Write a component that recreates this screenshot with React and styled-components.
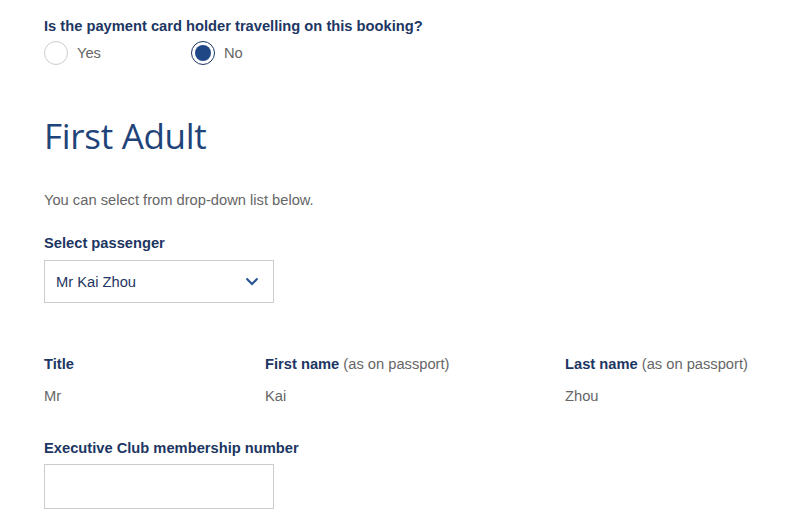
import React from 'react';
import styled, { createGlobalStyle } from 'styled-components';

const GlobalStyle = createGlobalStyle`
  body {
    margin: 0;
    background: #fff;
    font-family: "Liberation Sans", Arial, sans-serif;
  }
`;

const Page = styled.div`
  padding: 17px 44px 0;
  width: 800px;
  box-sizing: border-box;
`;

const Question = styled.div`
  font-size: 14.7px;
  font-weight: bold;
  color: #1d3663;
  line-height: 18px;
`;

const RadioRow = styled.div`
  display: flex;
  margin-top: 6px;
`;

const RadioOption = styled.label`
  display: flex;
  align-items: center;
  gap: 9px;
  width: 147px;
  font-size: 14.7px;
  color: #666;
`;

const RadioCircle = styled.span`
  width: 24px;
  height: 24px;
  box-sizing: border-box;
  border-radius: 50%;
  border: 1px solid ${p => (p.checked ? '#1d3663' : '#ccc')};
  display: flex;
  align-items: center;
  justify-content: center;
  &::after {
    content: '';
    display: ${p => (p.checked ? 'block' : 'none')};
    width: 16px;
    height: 16px;
    border-radius: 50%;
    background: #1f4785;
  }
`;

const Heading = styled.h1`
  margin: 48px 0 0;
  font-family: "Open Sans", sans-serif;
  font-weight: 400;
  font-size: 35px;
  line-height: 46px;
  color: #1f4479;
  letter-spacing: -0.3px;
`;

const Hint = styled.p`
  margin: 32px 0 0;
  font-size: 14.7px;
  color: #666;
  line-height: 18px;
`;

const Label = styled.div`
  font-size: 14.7px;
  font-weight: bold;
  color: #1d3663;
  line-height: 18px;
  margin-top: ${p => p.top || 0}px;
  span {
    font-weight: normal;
    color: #666;
  }
`;

const SelectBox = styled.div`
  margin-top: 8px;
  width: 230px;
  height: 43px;
  box-sizing: border-box;
  border: 1px solid #ccc;
  display: flex;
  align-items: center;
  justify-content: space-between;
  padding: 0 14px 0 11px;
  font-size: 14.7px;
  color: #1d3663;
`;

const TextInput = styled.div`
  margin-top: 7px;
  width: 230px;
  height: 45px;
  box-sizing: border-box;
  border: 1px solid #ccc;
`;

const Details = styled.div`
  display: grid;
  grid-template-columns: 221px 300px 1fr;
  margin-top: 52px;
  row-gap: 14px;
`;

const Value = styled.div`
  font-size: 14.7px;
  color: #666;
  line-height: 18px;
`;

const Chevron = () => (
  <svg width="14" height="9" viewBox="0 0 14 9">
    <path d="M1.5 1.5 L7 7 L12.5 1.5" fill="none" stroke="#2a5592" strokeWidth="2.2" />
  </svg>
);

export default function App() {
  return (
    <>
      <GlobalStyle />
      <Page>
        <Question>Is the payment card holder travelling on this booking?</Question>
        <RadioRow>
          <RadioOption>
            <RadioCircle />
            Yes
          </RadioOption>
          <RadioOption>
            <RadioCircle checked />
            No
          </RadioOption>
        </RadioRow>
        <Heading>First Adult</Heading>
        <Hint>You can select from drop-down list below.</Hint>
        <Label top={25}>Select passenger</Label>
        <SelectBox>
          Mr Kai Zhou
          <Chevron />
        </SelectBox>
        <Details>
          <Label>Title</Label>
          <Label>First name <span>(as on passport)</span></Label>
          <Label>Last name <span>(as on passport)</span></Label>
          <Value>Mr</Value>
          <Value>Kai</Value>
          <Value>Zhou</Value>
        </Details>
        <Label top={34}>Executive Club membership number</Label>
        <TextInput />
      </Page>
    </>
  );
}
